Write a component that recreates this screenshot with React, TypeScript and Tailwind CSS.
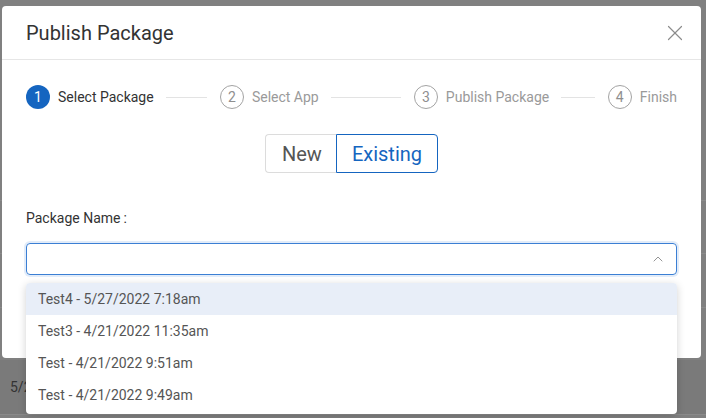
import { ChevronUp, X } from "lucide-react";

const steps = ["Select Package", "Select App", "Publish Package", "Finish"];

const options = [
  "Test4 - 5/27/2022 7:18am",
  "Test3 - 4/21/2022 11:35am",
  "Test - 4/21/2022 9:51am",
  "Test - 4/21/2022 9:49am",
];

function Stepper({ current }: { current: number }) {
  return (
    <div className="flex items-center">
      {steps.map((label, i) => {
        const last = i === steps.length - 1;
        const active = i === current;
        return (
          <div key={label} className={last ? "flex flex-none items-center" : "flex flex-1 items-center"}>
            {active ? (
              <div className="flex h-6 w-6 items-center justify-center rounded-full bg-[#1565c0] text-[14px] text-white">
                {i + 1}
              </div>
            ) : (
              <div className="flex h-6 w-6 items-center justify-center rounded-full border border-[#a3a3a3] text-[14px] text-[#8f8f8f]">
                {i + 1}
              </div>
            )}
            <span className={active ? "ml-2 text-[14px] text-[#333]" : "ml-2 text-[14px] text-[#9a9a9a]"}>{label}</span>
            {!last && <div className="ml-3 mr-[13px] h-px flex-1 bg-[#e3e3e3]" />}
          </div>
        );
      })}
    </div>
  );
}

export default function App() {
  return (
    <div className="relative h-[418px] w-[706px] overflow-hidden bg-[#808080] font-['Roboto',sans-serif]">
      {/* dimmed page behind the modal */}
      <div className="flex flex-col pt-[200px]">
        <div className="h-[53px] border-t border-[#8a8a8a]" />
        <div className="h-[54px] border-t border-[#8a8a8a]" />
        <div className="h-[53px] border-t border-[#8a8a8a]" />
        <div className="flex h-[55px] items-center border-b border-[#8a8a8a] bg-[#7a7a7a] pl-[10px] text-[14px] text-[#333]">
          5/27/2022
        </div>
      </div>

      {/* modal */}
      <div className="absolute left-[2px] top-[6px] h-[352px] w-[699px] rounded-[4px] bg-white">
        <div className="flex h-[54px] items-center justify-between border-b border-[#e6e6e6] pl-6 pr-[13px]">
          <h2 className="text-[20px] text-[#333]">Publish Package</h2>
          <X className="h-[26px] w-[26px] text-[#8c8c8c]" strokeWidth={1.1} />
        </div>

        <div className="px-6 pt-[25px]">
          <Stepper current={0} />

          <div className="mt-[25px] flex justify-center">
            <div className="flex h-[39px] items-center rounded-l-[4px] border border-r-0 border-[#dcdcdc] pl-[16px] pr-[14px] text-[20px] text-[#555]">
              New
            </div>
            <div className="flex h-[39px] items-center rounded-r-[4px] border border-[#1565c0] px-[15px] text-[20px] text-[#1565c0]">
              Existing
            </div>
          </div>

          <div className="mt-[35px] text-[14px] leading-5 text-[#333]">
            Package Name<span className="ml-[3px]">:</span>
          </div>

          <div className="relative mt-[15px]">
            <div className="flex h-8 items-center justify-end rounded-[4px] border border-[#3b7fd4] pr-[10px] ring-2 ring-[#3b7fd4]/15">
              <ChevronUp className="h-4 w-4 text-[#8c8c8c]" strokeWidth={1.4} />
            </div>
            <div className="absolute left-0 right-0 top-[40px] overflow-hidden rounded-[4px] bg-white shadow-[0_2px_8px_rgba(0,0,0,0.18)]">
              {options.map((opt, i) => (
                <div
                  key={opt}
                  className={
                    i === 0
                      ? "flex h-8 items-center bg-[#e8eef8] px-3 text-[14px] text-[#555]"
                      : "flex h-8 items-center px-3 text-[14px] text-[#555]"
                  }
                >
                  {opt}
                </div>
              ))}
              <div className="h-[3px]" />
            </div>
          </div>
        </div>
      </div>
    </div>
  );
}
